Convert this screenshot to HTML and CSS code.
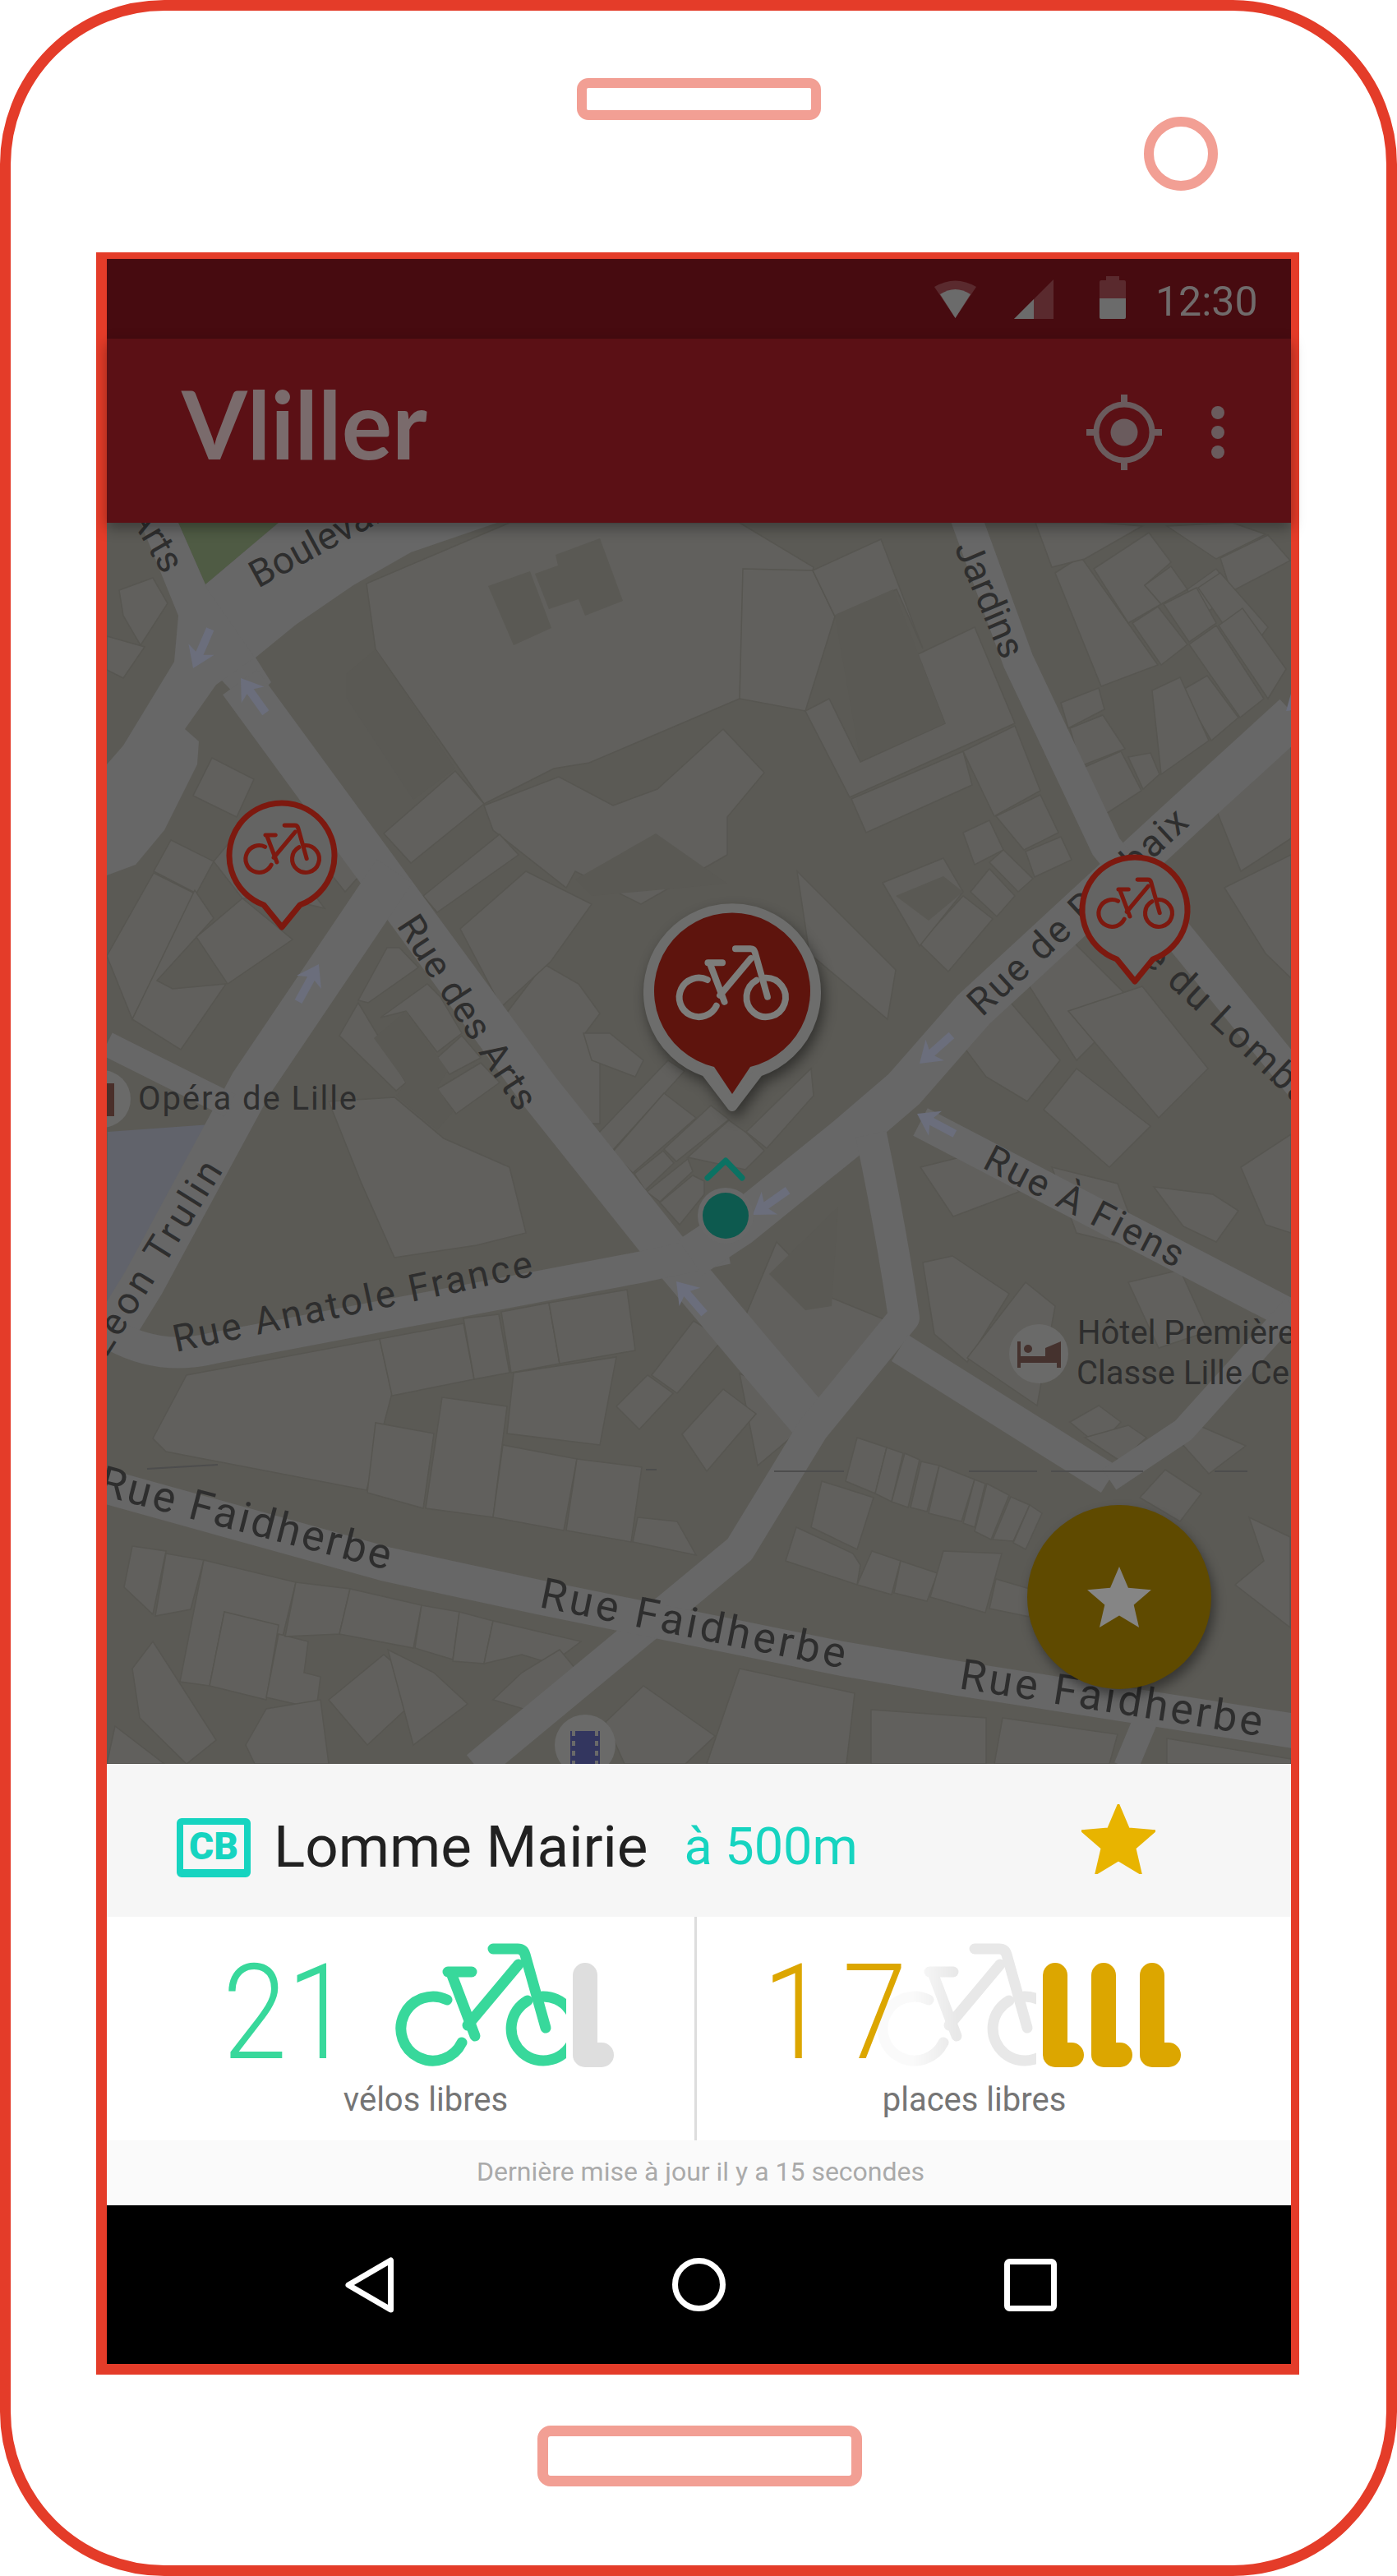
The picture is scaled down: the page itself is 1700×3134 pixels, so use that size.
FILE: index.html
```html
<!DOCTYPE html>
<html lang="fr">

<head>
    <meta charset="UTF-8">
    <title>Vliller</title>
    <link rel="stylesheet" href="styles.css">
</head>

<body>
    <svg class="defs" width="0" height="0">
        <defs>
            <symbol id="bike" viewBox="0 0 230 151" overflow="visible">
                <g fill="none" stroke-linecap="round" stroke-linejoin="round">
                    <path d="M63 69A39 39 0 1 0 81 121" />
                    <path d="M161 70A39 39 0 1 0 179 65" />
                    <path d="M119 7H149Q156 7 158 14L183 103" />
                    <path d="M64 35H93" />
                    <path d="M69 39L97 113" />
                    <path d="M150 26L88 100" />
                </g>
            </symbol>
            <symbol id="rack" viewBox="0 0 50 127">
                <path d="M15 15V112H35" fill="none" stroke="currentColor" stroke-width="30" stroke-linecap="round" stroke-linejoin="round" />
            </symbol>
            <path id="arrow" d="M0 0L17 25L5 20V52H-5V20L-17 25Z" />
            <path id="star" d="M12 17.27L18.18 21l-1.64-7.03L22 9.24l-7.19-.61L12 2 9.19 8.63 2 9.24l5.46 4.73L5.82 21z" />
        </defs>
    </svg>

    <div class="phone">
        <div class="phone-top">
            <div class="speaker"></div>
            <div class="camera"></div>
        </div>

        <div class="screen">
            <div class="statusbar">
                <svg class="status-wifi" viewBox="0 0 51 47">
                    <path d="M25.500 47L0 9Q25.500 -6 51 9Z" fill="#5a2a2e" />
                    <path d="M25.500 47L7 18Q25.500 6 44 18Z" fill="#6b6b6b" />
                </svg>
                <svg class="status-signal" viewBox="0 0 48 48">
                    <path d="M0 48L48 0V48Z" fill="#5a2a2e" />
                    <path d="M0 48L24 24V48Z" fill="#6b6b6b" />
                </svg>
                <svg class="status-battery" viewBox="0 0 32 52">
                    <path d="M8 0H24V5H30Q32 5 32 7V50Q32 52 30 52H2Q0 52 0 50V7Q0 5 2 5H8Z" fill="#5a2a2e" />
                    <path d="M0 27H32V50Q32 52 30 52H2Q0 52 0 50Z" fill="#6b6b6b" />
                </svg>
                <span class="clock">12:30</span>
            </div>

            <div class="appbar">
                <span class="logo">Vliller</span>
                <svg class="locate" viewBox="0 0 92 92">
                    <circle cx="46" cy="46" r="34" fill="none" stroke="#6a5b5d" stroke-width="7" />
                    <circle cx="46" cy="46" r="16.500" fill="#6a5b5d" />
                    <path d="M46 0V12M46 80V92M0 46H12M80 46H92" stroke="#6a5b5d" stroke-width="8" />
                </svg>
                <div class="menu-dots"><i></i><i></i><i></i></div>
            </div>

            <div class="map">
                <svg class="map-canvas" viewBox="130 636 1441 1510" width="1441" height="1510">
                    <rect x="130" y="636" width="1441" height="1510" fill="#5b5a55" />

                    <!-- buildings -->
                    <g class="bld">
                        <polygon points="446,710 620,636 900,636 990,690 960,824 900,850 717,928 674,935 589,978 457,790" />
                        <polygon points="746,980 800,960 880,887 930,940 885,994 885,1040 780,1100 700,1060 689,1080 600,1010 589,980 680,945" />
                        <polygon points="467,1014 554,938 589,978 500,1050" />
                        <polygon points="145,718 186,703 204,734 171,785 150,749" />
                        <polygon points="130,774 176,787 150,825 130,815" />
                        <polygon points="235,968 258,922 309,948 288,994" />
                        <polygon points="187,1060 208,1022 260,1048 239,1087" />
                        <polygon points="130,1163 187,1062 237,1087 161,1240" />
                        <polygon points="161,1240 237,1083 260,1117 191,1193 210,1203 275,1197 220,1277" />
                        <polygon points="239,1140 295,1093 356,1143 277,1197" />
                        <polygon points="260,1048 300,1000 345,1040 395,1105 330,1090 295,1093" />
                        <polygon points="400,960 460,1040 420,1085 360,1010" />
                        <polygon points="515,1090 608,1015 631,1040 532,1110" />
                        <polygon points="616,1233 662,1173 704,1197 730,1233 712,1257 730,1277 730,1367 677,1367" />
                        <polygon points="560,1130 640,1060 720,1100 670,1170 610,1225" />
                        <polygon points="436,1217 471,1153 486,1153 509,1177 448,1220" />
                        <polygon points="463,1238 520,1197 536,1213 562,1257 532,1280 494,1230" />
                        <polygon points="532,1287 562,1260 585,1287 547,1307" />
                        <polygon points="532,1325 585,1293 608,1317 555,1355" />
                        <polygon points="413,1260 436,1220 494,1317 482,1327" />
                        <polygon points="400,1340 480,1335 540,1385 620,1420 640,1500 580,1515 480,1530 440,1440" />
                        <polygon points="710,1257 742,1257 783,1290 773,1310 720,1290" />
                        <polygon points="727,1380 813,1290 833,1303 745,1400" />
                        <polygon points="745,1402 808,1330 847,1360 770,1427" />
                        <polygon points="772,1428 807,1400 820,1415 785,1448" />
                        <polygon points="808,1398 865,1345 887,1362 823,1413" />
                        <polygon points="787,1450 837,1410 843,1425 803,1462" />
                        <polygon points="803,1463 843,1430 857,1437 857,1453 827,1490" />
                        <polygon points="837,1408 887,1363 908,1378 930,1400 907,1423" />
                        <polygon points="908,1377 987,1300 990,1333 933,1397" />
                        <polygon points="970,1060 1090,1180 1080,1240 985,1160" />
                        <polygon points="904,692 989,694 1016,750 980,865 900,850" />
                        <polygon points="989,694 1072,656 1123,789 1091,717 1016,750" />
                        <polygon points="980,865 1009,850 1047,927 1150,880 1117,796 1186,763 1235,880 1034,970" />
                        <polygon points="1036,972 1172,914 1183,955 1054,1013" />
                        <polygon points="1172,914 1235,883 1266,962 1210,993" />
                        <polygon points="1212,993 1266,967 1288,1013 1246,1034" />
                        <polygon points="1248,1036 1291,1018 1304,1046 1259,1067" />
                        <polygon points="1172,1013 1204,998 1221,1034 1186,1052" />
                        <polygon points="1204,1049 1221,1034 1257,1069 1239,1085" />
                        <polygon points="1181,1085 1204,1057 1235,1090 1213,1115" />
                        <polygon points="1119,1148 1172,1090 1208,1118 1154,1182" />
                        <polygon points="1074,1074 1148,1044 1172,1085 1119,1151" />
                        <polygon points="1284,697 1315,677 1409,809 1340,835" />
                        <polygon points="1331,692 1398,648 1425,684 1393,712 1413,735 1373,758" />
                        <polygon points="1393,712 1425,689 1445,717 1413,735" />
                        <polygon points="1445,717 1480,692 1503,722 1456,753" />
                        <polygon points="1485,679 1543,651 1570,682 1498,720" />
                        <polygon points="1378,758 1409,738 1445,784 1413,809" />
                        <polygon points="1416,735 1456,715 1480,758 1447,781" />
                        <polygon points="1458,715 1485,697 1543,763 1516,799" />
                        <polygon points="1483,761 1512,740 1565,814 1543,850" />
                        <polygon points="1447,784 1480,761 1538,850 1509,873" />
                        <polygon points="1438,840 1469,822 1507,873 1474,901" />
                        <polygon points="1402,840 1436,824 1471,901 1413,942" />
                        <polygon points="1291,855 1337,837 1344,863 1300,886" />
                        <polygon points="1302,886 1342,870 1369,911 1315,932" />
                        <polygon points="1311,937 1364,914 1389,962 1346,990" />
                        <polygon points="1373,921 1400,916 1411,942 1391,960" />
                        <polygon points="1260,636 1340,636 1390,640 1320,680 1280,690" />
                        <polygon points="1420,640 1500,636 1540,650 1480,680" />
                        <polygon points="1470,960 1571,900 1571,1020 1510,1060" />
                        <polygon points="1490,1080 1571,1040 1571,1190 1540,1160" />
                        <polygon points="1240,1180 1300,1140 1380,1220 1310,1290" />
                        <polygon points="1170,1270 1230,1220 1290,1290 1250,1340 1200,1310" />
                        <polygon points="1300,1230 1390,1200 1470,1300 1410,1360" />
                        <polygon points="1310,1300 1400,1370 1350,1420 1270,1350" />
                        <polygon points="1120,1420 1200,1400 1240,1450 1160,1480" />
                        <polygon points="1404,1444 1476,1453 1507,1473 1480,1511 1440,1492" />
                        <polygon points="1510,1420 1571,1380 1571,1500 1540,1490" />
                        <polygon points="1280,1420 1360,1440 1390,1520 1310,1500" />
                        <polygon points="945,1511 1012,1579 1083,1608 1005,1710 900,1618" />
                        <polygon points="900,1671 922,1681 954,1705 985,1730 922,1783" />
                        <polygon points="1123,1536 1159,1528 1228,1574 1177,1657 1137,1623" />
                        <polygon points="1248,1560 1284,1589 1262,1710 1212,1676 1177,1652" />
                        <polygon points="1373,1560 1436,1545 1470,1620 1410,1640" />
                        <polygon points="1302,1730 1337,1710 1364,1730 1337,1759" />
                        <polygon points="1320,1749 1373,1734 1395,1749 1364,1778" />
                        <polygon points="1458,1734 1516,1759 1471,1793 1436,1754" />
                        <polygon points="1418,1788 1462,1817 1436,1851 1387,1822" />
                        <polygon points="1503,1928 1538,1899 1520,1846 1570,1870 1570,1980" />
                        <polygon points="1043,1749 1079,1761 1065,1817 1029,1802" />
                        <polygon points="1079,1761 1099,1768 1085,1827 1065,1817" />
                        <polygon points="1101,1768 1119,1776 1105,1834 1085,1827" />
                        <polygon points="1121,1778 1143,1783 1128,1839 1108,1834" />
                        <polygon points="1143,1783 1186,1800 1170,1851 1130,1841" />
                        <polygon points="1186,1800 1199,1805 1186,1858 1172,1853" />
                        <polygon points="1201,1805 1228,1819 1206,1873 1186,1863" />
                        <polygon points="1230,1821 1253,1831 1233,1875 1208,1873" />
                        <polygon points="1253,1831 1268,1841 1248,1885 1233,1877" />
                        <polygon points="1000,1802 1063,1822 1043,1885 987,1858" />
                        <polygon points="969,1858 1038,1890 1047,1904 1043,1928 956,1899" />
                        <polygon points="1061,1887 1096,1899 1085,1940 1043,1928" />
                        <polygon points="1096,1899 1141,1914 1128,1948 1088,1938" />
                        <polygon points="1148,1887 1219,1890 1199,1962 1132,1943" />
                        <polygon points="1212,1921 1253,1933 1253,1967 1204,1957" />
                        <polygon points="186,1750 227,1673 462,1629 477,1695 446,1813 202,1766" />
                        <polygon points="447,1816 457,1731 528,1744 515,1835" />
                        <polygon points="518,1835 538,1700 617,1711 600,1846" />
                        <polygon points="617,1744 625,1670 750,1651 730,1758" />
                        <polygon points="600,1846 612,1758 702,1775 686,1862" />
                        <polygon points="689,1862 702,1775 781,1785 768,1876" />
                        <polygon points="770,1876 776,1846 824,1851 847,1892" />
                        <polygon points="477,1698 462,1629 564,1610 577,1678" />
                        <polygon points="577,1678 564,1604 607,1599 620,1670" />
                        <polygon points="622,1670 610,1596 668,1585 681,1659" />
                        <polygon points="681,1659 668,1585 763,1569 773,1643" />
                        <polygon points="750,1711 788,1673 819,1695 778,1739" />
                        <polygon points="793,1673 844,1607 880,1629 824,1695" />
                        <polygon points="830,1745 880,1690 920,1720 860,1790" />
                        <polygon points="151,1931 161,1881 202,1887 186,1964" />
                        <polygon points="189,1966 202,1890 248,1898 232,1958" />
                        <polygon points="219,2046 248,1898 360,1925 344,1991 273,1961 255,2051" />
                        <polygon points="255,2051 273,1961 339,1977 324,2068" />
                        <polygon points="324,2065 339,1988 375,1997 370,2035 390,2040 385,2079" />
                        <polygon points="347,1991 360,1925 426,1933 413,1988" />
                        <polygon points="413,1988 426,1933 513,1953 503,2005" />
                        <polygon points="505,2005 513,1953 559,1961 551,2019" />
                        <polygon points="551,2021 559,1961 600,1972 589,2024" />
                        <polygon points="589,2024 600,1972 707,1997 671,2024 635,2013" />
                        <polygon points="161,2030 186,1997 263,2117 227,2146 170,2090" />
                        <polygon points="299,2123 324,2079 390,2068 400,2146 310,2146" />
                        <polygon points="400,2068 467,2013 518,2057 447,2123" />
                        <polygon points="472,2007 528,2035 569,2073 503,2123" />
                        <polygon points="600,2068 635,2035 681,2007 700,2030 640,2080" />
                        <polygon points="737,2095 783,2051 870,2112 834,2146 760,2146" />
                        <polygon points="900,2030 1040,2060 1030,2146 860,2146" />
                        <polygon points="1060,2080 1200,2090 1200,2146 1060,2146" />
                        <polygon points="1220,2090 1360,2110 1350,2146 1210,2146" />
                        <polygon points="1420,2115 1571,2140 1571,2146 1420,2146" />
                        <polygon points="140,2100 200,2146 130,2146" />
                    </g>

                    <!-- darker blocks over the buildings -->
                    <g class="dark">
                        <polygon points="594,713 645,695 671,764 625,785" />
                        <polygon points="651,698 679,688 676,675 730,655 758,731 712,749 704,729 668,741" />
                        <polygon points="421,820 457,790 554,935 503,973 421,848" />
                        <polygon points="798,1014 885,1075 720,1090 700,1070" />
                        <polygon points="1016,748 1087,717 1150,880 1047,926" />
                        <polygon points="455,1263 494,1230 545,1303 532,1322 551,1353 532,1375 482,1333 494,1317" />
                        <polygon points="936,1550 1020,1468 1012,1589 980,1594" />
                        <polygon points="1090,1090 1148,1066 1172,1085 1130,1120" />
                    </g>

                    <polygon class="park" points="217,636 339,636 250,711" />
                    <polygon class="plaza" points="131,1377 283,1366 181,1547 130,1640" />

                    <!-- streets -->
                    <g class="roads">
                        <polygon class="road-fill" points="250,711 339,636 605,636 500,672 430,712 360,760 311,800 330,830 300,860 258,815" />
                        <polygon class="road-fill" points="171,636 217,636 253,718 310,800 263,833 225,887 242,902 240,930 200,1010 165,1052 130,1065 130,930 150,907 212,805 217,749" />
                        <path class="w52" d="M292 830L497 1110L656 1327L809 1519L920 1651L1000 1745" />
                        <path class="w52" d="M480 1060L306 1318L175 1560L135 1625" />
                        <path class="w30" d="M130 1270L280 1345" />
                        <path class="w38" d="M115 1610C170 1650 220 1650 260 1640L783 1541L885 1519" />
                        <path class="w52" d="M840 1530L900 1490L1030 1385L1100 1325L1185 1228L1440 993L1575 870" />
                        <path class="w38" d="M1172 620L1239 804L1346 1030L1590 1330" />
                        <path class="w38" d="M1120 1365L1575 1602" />
                        <path class="w38" d="M1060 1380Q1085 1500 1100 1603L989 1739L900 1885L580 2150" />
                        <path class="w38" d="M1095 1640L1350 1800" />
                        <path class="w30" d="M1350 1800L1440 1740L1575 1590" />
                        <path class="w42" d="M120 1806L470 1903L655 1943L1025 2018L1166 2042L1575 2106" />
                        <path class="w30" d="M1395 2090L1370 2150" />
                    </g>

                    <!-- one way arrows -->
                    <g class="arrows">
                        <use href="#arrow" transform="translate(235 813) rotate(-156.500)" />
                        <use href="#arrow" transform="translate(293 825) rotate(-35.700)" />
                        <use href="#arrow" transform="translate(388 1173) rotate(28.700)" />
                        <use href="#arrow" transform="translate(916 1478) rotate(-125)" />
                        <use href="#arrow" transform="translate(1119 1294) rotate(-131.500)" />
                        <use href="#arrow" transform="translate(1116 1355) rotate(-62)" />
                        <use href="#arrow" transform="translate(823 1559) rotate(-41)" />
                        <use href="#arrow" transform="translate(1565 865) rotate(-130)" />
                    </g>

                    <path class="tile-seam" d="M179 1787L265 1782M786 1788H799M942 1790H1027M1179 1790H1262M1279 1790H1391M1478 1790H1518" />

                    <!-- street names -->
                    <g class="labels">
                        <text transform="translate(156 626) rotate(60)">Arts</text>
                        <text transform="translate(314 716) rotate(-28.500)">Boulevard</text>
                        <text transform="translate(1161 666) rotate(67)" textLength="150">Jardins</text>
                        <text transform="translate(482 1126) rotate(57)" textLength="272">Rue des Arts</text>
                        <text transform="translate(1195 1238) rotate(-42.800)" textLength="346">Rue de Roubaix</text>
                        <text transform="translate(1345 1127) rotate(43)" textLength="370">Rue du Lombard</text>
                        <text transform="translate(1194 1420) rotate(27.400)" textLength="267">Rue À Fiens</text>
                        <text transform="translate(129 1653) rotate(-58)" textLength="270">Léon Trulin</text>
                        <text transform="translate(214 1645) rotate(-12)" textLength="446">Rue Anatole France</text>
                        <text class="wide" transform="translate(118 1818) rotate(14.600)" textLength="365">Rue Faidherbe</text>
                        <text class="wide" transform="translate(655 1955) rotate(11.400)" textLength="378">Rue Faidherbe</text>
                        <text class="wide" transform="translate(1166 2054) rotate(9)" textLength="372">Rue Faidherbe</text>
                        <text class="place" x="168" y="1350" textLength="266">Opéra de Lille</text>
                        <text class="place" x="1311" y="1635">Hôtel Première</text>
                        <text class="place" x="1310" y="1684">Classe Lille Centre</text>
                    </g>

                    <!-- places -->
                    <circle class="poi" cx="124" cy="1337" r="35" />
                    <rect x="130" y="1318" width="9" height="40" fill="#4a2f2a" />
                    <circle class="poi" cx="1264" cy="1647" r="36" />
                    <path d="M1238 1632V1664H1242V1658H1286V1664H1291V1632L1272 1640V1650H1242V1632Z" fill="#45322e" />
                    <circle cx="1251" cy="1641" r="5" fill="#45322e" />
                    <circle class="poi" cx="712" cy="2123" r="37" />
                    <path d="M694 2106H730V2148H694Z" fill="#33365f" />
                    <path class="film-holes" d="M698 2106V2148M726 2106V2148" />

                    <!-- stations -->
                    <g class="pin" transform="translate(343 1040)">
                        <path d="M-22 61A64 64 0 1 1 22 61L0 88Z" />
                    </g>
                    <use class="pin-bike" href="#bike" x="296" y="1001" width="97" height="64" />
                    <g class="pin" transform="translate(1381 1106)">
                        <path d="M-22 61A64 64 0 1 1 22 61L0 88Z" />
                    </g>
                    <use class="pin-bike" href="#bike" x="1334" y="1067" width="97" height="64" />

                    <g class="pin-big" transform="translate(891 1207)">
                        <path class="pin-halo" d="M-32 97A102 102 0 1 1 32 97L0 139Z" />
                        <path class="pin-core" d="M-22 91A95 95 0 1 1 22 91L0 124Z" />
                    </g>
                    <use class="pin-big-bike" href="#bike" x="822" y="1150" width="141" height="92" />

                    <!-- me -->
                    <circle cx="883" cy="1479" r="34" fill="#686868" />
                    <circle cx="883" cy="1479" r="28" fill="#0d5a4f" />
                    <path class="heading" d="M861 1433L883 1412L903 1433" />
                </svg>

                <div class="fab">
                    <svg class="fab-star" viewBox="2 2 20 19"><use href="#star" /></svg>
                </div>
            </div>

            <div class="station-head">
                <div class="cb">CB</div>
                <span class="station-name">Lomme Mairie</span>
                <span class="station-dist">à 500m</span>
                <svg class="fav" viewBox="2 2 20 19"><use href="#star" /></svg>
            </div>

            <div class="stats">
                <div class="stat stat-bikes">
                    <div class="stat-row">
                        <span class="count">21</span>
                        <svg class="bike-big" viewBox="0 0 208 151"><use href="#bike" width="230" height="151" /></svg>
                        <svg class="rack rack-off"><use href="#rack" /></svg>
                    </div>
                    <span class="stat-label">vélos libres</span>
                </div>
                <div class="stat stat-places">
                    <div class="stat-row">
                        <span class="count">17</span>
                        <svg class="bike-big" viewBox="0 0 194 151"><use href="#bike" width="230" height="151" /></svg>
                        <svg class="rack"><use href="#rack" /></svg>
                        <svg class="rack"><use href="#rack" /></svg>
                        <svg class="rack"><use href="#rack" /></svg>
                    </div>
                    <span class="stat-label">places libres</span>
                </div>
            </div>

            <div class="updated">Dernière mise à jour il y a 15 secondes</div>

            <div class="navbar">
                <svg class="nav-back" viewBox="0 0 59 68">
                    <path d="M55.500 4V64L4 34Z" />
                </svg>
                <svg class="nav-home" viewBox="0 0 65 65">
                    <circle cx="32.500" cy="32.500" r="29" />
                </svg>
                <svg class="nav-recent" viewBox="0 0 64 64">
                    <rect x="3.500" y="3.500" width="57" height="57" rx="3" />
                </svg>
            </div>
        </div>

        <div class="phone-bottom">
            <div class="home-button"></div>
        </div>
    </div>
</body>

</html>
```

FILE: styles.css
```css
body {
    margin: 0;
    background: #fff;
    font-family: Roboto, "Liberation Sans", sans-serif;
}

.defs {
    position: absolute;
}

.phone {
    box-sizing: border-box;
    width: 1700px;
    height: 3134px;
    border: 13px solid #e43c29;
    border-radius: 200px;
    overflow: hidden;
}

.phone-top {
    display: grid;
    grid-template-columns: 1fr auto 1fr;
    height: 294px;
}

.speaker {
    grid-column: 2;
    box-sizing: border-box;
    width: 297px;
    height: 51px;
    margin-top: 82px;
    border: 12px solid #f29f94;
    border-radius: 14px;
}

.camera {
    box-sizing: border-box;
    justify-self: end;
    width: 90px;
    height: 90px;
    margin: 129px 205px 0 0;
    border: 12px solid #f29f94;
    border-radius: 50%;
}

.screen {
    box-sizing: border-box;
    width: 1464px;
    height: 2582px;
    margin-left: 104px;
    border: solid #e43c29;
    border-width: 8px 10px 13px 13px;
    display: flex;
    flex-direction: column;
}

/* status bar */
.statusbar {
    height: 97px;
    background: #470b10;
    display: flex;
    align-items: flex-start;
    position: relative;
}

.status-wifi {
    width: 51px;
    height: 47px;
    margin: 25px 0 0 1007px;
}

.status-signal {
    width: 48px;
    height: 48px;
    margin: 25px 0 0 46px;
}

.status-battery {
    width: 32px;
    height: 52px;
    margin: 21px 0 0 56px;
}

.clock {
    margin: 23px 0 0 36px;
    font-size: 50px;
    line-height: 58px;
    color: #706b6b;
}

/* app bar */
.appbar {
    height: 224px;
    background: #5b1015;
    display: flex;
    align-items: center;
    position: relative;
    z-index: 1;
    box-shadow: 0 6px 16px rgba(0, 0, 0, .35);
}

.logo {
    margin: -20px 0 0 91px;
    font-family: Lato, sans-serif;
    font-weight: 700;
    font-size: 115px;
    line-height: 120px;
    color: #7a6b6c;
}

.locate {
    width: 92px;
    height: 92px;
    margin: 4px 0 0 auto;
}

.menu-dots {
    display: flex;
    flex-direction: column;
    gap: 8px;
    margin: 4px 81px 0 60px;
}

.menu-dots i {
    display: block;
    width: 16px;
    height: 16px;
    border-radius: 50%;
    background: #6a5b5d;
}

/* map */
.map {
    height: 1510px;
    position: relative;
    overflow: hidden;
}

.map-canvas {
    display: block;
}

.dark polygon {
    fill: #5a5954;
}

.bld polygon {
    fill: #61605d;
    stroke: #575651;
    stroke-width: 1.500;
}

.park {
    fill: #4f5b44;
}

.plaza {
    fill: #61636b;
}

.roads path {
    fill: none;
    stroke: #676767;
    stroke-linejoin: round;
}

.road-fill {
    fill: #676767;
}

.w30 {
    stroke-width: 30;
}

.w38 {
    stroke-width: 38;
}

.w42 {
    stroke-width: 42;
}

.w52 {
    stroke-width: 52;
}

.arrows {
    fill: #6b6e7c;
}

.tile-seam {
    fill: none;
    stroke: #4d4d4d;
    stroke-width: 2;
}

.labels text {
    font-size: 46px;
    fill: #2e2e2e;
}

.labels .wide {
    font-size: 52px;
}

.labels .place {
    font-size: 40px;
}

.poi {
    fill: #6a6a69;
}

.film-holes {
    fill: none;
    stroke: #6a6a69;
    stroke-width: 4;
    stroke-dasharray: 6 6;
}

.pin path {
    fill: #646463;
    stroke: #7d190f;
    stroke-width: 7;
    stroke-linejoin: round;
}

.pin-bike {
    stroke: #7d190f;
    stroke-width: 12;
}

.pin-big {
    filter: drop-shadow(4px 8px 8px rgba(0, 0, 0, .45));
}

.pin-halo {
    fill: #6d6d6c;
    stroke: #6d6d6c;
    stroke-width: 12;
    stroke-linejoin: round;
}

.pin-core {
    fill: #5e140d;
}

.pin-big-bike {
    stroke: #7d7d7b;
    stroke-width: 13;
}

.heading {
    fill: none;
    stroke: #0b7263;
    stroke-width: 7;
    stroke-linecap: round;
    stroke-linejoin: round;
}

.fab {
    position: absolute;
    right: 97px;
    bottom: 91px;
    width: 224px;
    height: 224px;
    border-radius: 50%;
    background: #5f4a00;
    box-shadow: 4px 8px 14px rgba(0, 0, 0, .4);
    display: flex;
    align-items: center;
    justify-content: center;
}

.fab-star {
    width: 78px;
    height: 74px;
    fill: #858585;
}

/* station */
.station-head {
    box-sizing: border-box;
    height: 186px;
    background: #f6f6f6;
    display: flex;
    align-items: center;
    padding: 16px 0 0 85px;
}

.cb {
    box-sizing: border-box;
    width: 90px;
    height: 72px;
    margin: 2px 28px 0 0;
    border: 8px solid #16d4c0;
    border-bottom-width: 10px;
    border-radius: 6px;
    text-align: center;
    font-size: 46px;
    line-height: 52px;
    font-weight: 900;
    color: #16d4c0;
}

.station-name {
    font-size: 71px;
    line-height: 80px;
    color: #212121;
}

.station-dist {
    margin-left: 44px;
    font-size: 63px;
    line-height: 80px;
    color: #16d4c0;
}

.fav {
    width: 90px;
    height: 85px;
    margin: -20px 165px 0 auto;
    fill: #e8b400;
    stroke: #e8b400;
    stroke-width: .5;
    stroke-linejoin: round;
}

.stats {
    height: 272px;
    background: #fff;
    display: flex;
}

.stat {
    box-sizing: border-box;
    display: flex;
    flex-direction: column;
    align-items: center;
    padding-top: 32px;
}

.stat-bikes {
    width: 718px;
    padding-left: 43px;
    border-right: 3px solid #ddd;
    color: #38d89b;
}

.stat-places {
    width: 723px;
    padding-right: 54px;
    color: #dca600;
}

.stat-row {
    display: flex;
    align-items: flex-end;
    height: 151px;
}

.count {
    font-size: 162px;
    font-weight: 300;
    line-height: 151px;
    margin-bottom: -10px;
    transform: scaleX(.87);
    transform-origin: left;
}

.stat-bikes .count {
    margin-right: 30px;
}

.stat-places .count {
    margin-right: -85px;
    letter-spacing: 22px;
    position: relative;
    z-index: 1;
}

.bike-big {
    width: 208px;
    height: 151px;
    stroke: currentColor;
    stroke-width: 13;
    flex: none;
}

.stat-places .bike-big {
    width: 194px;
    stroke: #e8e8e8;
    -webkit-mask-image: linear-gradient(to right, rgba(0, 0, 0, .2) 22%, #000 50%);
    mask-image: linear-gradient(to right, rgba(0, 0, 0, .2) 22%, #000 50%);
}

.rack {
    width: 50px;
    height: 127px;
    margin-left: 8px;
    flex: none;
}

.rack + .rack {
    margin-left: 9px;
}

.rack-off {
    color: #dedede;
}

.stat-label {
    margin-top: 14px;
    font-size: 40px;
    line-height: 52px;
    color: #757575;
}

.stat-bikes .stat-label {
    margin-left: 18px;
}

.stat-places .stat-label {
    margin-left: 6px;
}

.updated {
    height: 79px;
    background: #fafafa;
    text-align: center;
    padding-left: 4px;
    font-size: 32px;
    line-height: 76px;
    color: #aaa;
}

/* android nav */
.navbar {
    height: 193px;
    background: #000;
    display: flex;
    align-items: center;
    justify-content: center;
    gap: 339px;
    padding-left: 5px;
}

.navbar svg {
    fill: none;
    stroke: #fff;
    stroke-width: 7;
    stroke-linejoin: round;
}

.nav-back {
    width: 59px;
    height: 68px;
}

.nav-home {
    width: 65px;
    height: 65px;
}

.nav-recent {
    width: 64px;
    height: 64px;
}

.phone-bottom {
    display: flex;
    justify-content: center;
    padding-top: 62px;
}

.home-button {
    box-sizing: border-box;
    width: 395px;
    height: 74px;
    margin-left: 2px;
    border: 13px solid #f29f94;
    border-radius: 16px;
}
```
